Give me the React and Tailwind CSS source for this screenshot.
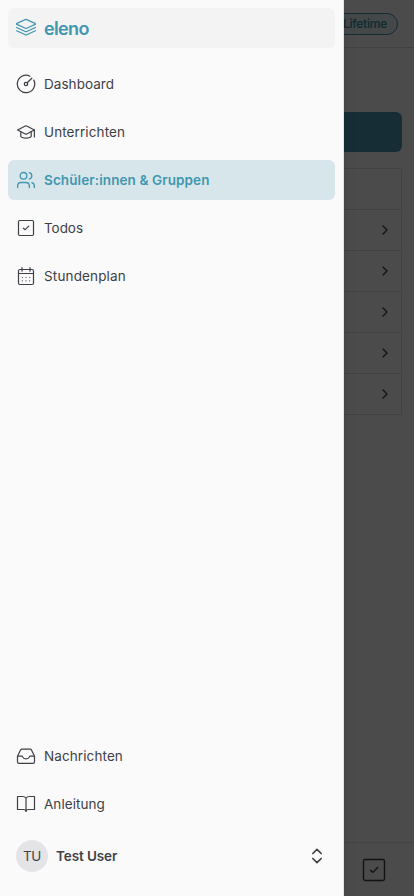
import React from "react";
import { Users, ChevronRight, ChevronsUpDown } from "lucide-react";

function Icon({ children, className = "size-5 shrink-0", width = 1.1 }) {
  return (
    <svg viewBox="0 0 20 20" className={className} fill="none" stroke="currentColor" strokeWidth={width} strokeLinecap="round" strokeLinejoin="round">
      {children}
    </svg>
  );
}

const Logo = () => (
  <Icon width={1.25}>
    <path d="M9.300 1.600.9 5.400Q.1 5.900.9 6.400l8.400 3.800q.7.300 1.400 0l8.400-3.800q.8-.5 0-1L10.700 1.600q-.7-.3-1.400 0Z" />
    <path d="M.6 9.500l8.700 4q.7.300 1.400 0l8.700-4" />
    <path d="M.6 12.800l8.700 4q.7.300 1.400 0l8.700-4" />
  </Icon>
);

const Gauge = () => (
  <Icon width={1.25}>
    <path d="M13.900 2.200a8.700 8.700 0 1 0 3.900 3.900" />
    <circle cx="10" cy="10" r="1.700" />
    <path d="M11.200 8.800 15.800 4.200" />
  </Icon>
);

const Cap = () => (
  <Icon width={1.2}>
    <path d="M1.600 8 9.300 4q.7-.3 1.400 0L18.400 8 10.700 12q-.7.300-1.400 0Z" />
    <path d="M4.800 9.800v4.400c0 .8 2.300 2 5.200 2s5.200-1.200 5.200-2V9.800M18.400 8v7" />
  </Icon>
);

const Check = ({ className, width = 1.2 }) => (
  <Icon className={className} width={width}>
    <rect x="2.500" y="2.500" width="15" height="15" rx="1.200" />
    <path d="m7.400 10.200 1.800 1.500 3.500-3.500" />
  </Icon>
);

const Calendar = () => (
  <Icon width={1.2}>
    <rect x="2.500" y="3.500" width="15" height="15" rx="1.500" />
    <path d="M2.500 7.500h15M6 1.500v3.700M14 1.500v3.700" />
    <path d="M6.300 11.500h.01M10 11.500h.01M13.700 11.500h.01M6.300 14.800h.01M10 14.800h.01M13.700 14.800h.01" />
  </Icon>
);

const Tray = () => (
  <Icon width={1.2}>
    <path d="m1.500 10.200 3-6.100q.5-1 1.500-1h8q1 0 1.500 1l3 6.100v5.600q0 1.500-1.500 1.500H3q-1.500 0-1.500-1.500Z" />
    <path d="M1.500 10.200h4.200q.7 0 .9.700.7 2 3.400 2t3.400-2q.2-.7.9-.7h4.200" />
  </Icon>
);

const Book = () => (
  <Icon width={1.2}>
    <path d="M10 4.100Q8.700 2.500 6.500 2.500h-5v13h5.800q2.200 0 2.700 1.900.5-1.900 2.700-1.900h5.800v-13h-5Q11.300 2.500 10 4.100ZM10 4.100v13.300" />
  </Icon>
);

function NavItem({ icon, label, tracking, active }) {
  return (
    <a className={`flex h-10 items-center gap-2 rounded-md px-2 text-[13.5px] ${active ? "bg-[#d7e6ea] font-semibold text-[#4196b0]" : "text-[#3f3f46]"}`}>
      {icon}
      <span className={`whitespace-nowrap pt-px ${tracking}`}>{label}</span>
    </a>
  );
}

function Page() {
  return (
    <div className="flex h-full flex-col bg-[#fafafa]">
      <header className="flex h-12 items-center justify-end border-b border-[#dcdcdc] pr-4">
        <span className="flex h-[22px] items-center rounded-full border border-[#4196b0] bg-[#e7f0f3] px-2.5 pt-px text-xs font-semibold tracking-[-0.35px] text-[#4196b0]">Lifetime</span>
      </header>
      <main className="grow px-3 pt-16">
        <div className="h-10 rounded-md bg-[#4e98b2]" />
        <div className="mt-4 border border-[#dedee2]">
          <div className="h-10" />
          {[0, 1, 2, 3, 4].map((row) => (
            <div key={row} className="flex h-[41px] items-center justify-end border-t border-[#dedee2] pr-2">
              <ChevronRight className="size-4 text-[#3f3f46]" />
            </div>
          ))}
        </div>
      </main>
      <footer className="flex h-[54px] items-center justify-end border-t border-[#e4e4e7] pr-[26px]">
        <Check className="size-7 text-[#3f3f46]" width={1} />
      </footer>
    </div>
  );
}

export default function App() {
  return (
    <div className="relative h-[896px] w-[414px] overflow-hidden font-[Inter,sans-serif]">
      <Page />
      <div className="absolute inset-0 bg-black/70" />
      <aside className="absolute inset-y-0 left-0 flex w-[344px] flex-col border-r border-[#e4e4e7] bg-[#fafafa] px-2 shadow-lg">
        <div className="mt-2 flex h-10 items-center gap-2 rounded-md bg-[#f3f3f3] px-2 text-[#4196b0]">
          <Logo />
          <span className="pt-px text-lg leading-5 font-semibold tracking-[-0.65px]">eleno</span>
        </div>
        <nav className="mt-4 flex flex-col gap-2">
          <NavItem icon={<Gauge />} label="Dashboard" tracking="tracking-[0.05px]" />
          <NavItem icon={<Cap />} label="Unterrichten" tracking="tracking-[0.1px]" />
          <NavItem icon={<Users className="size-5 shrink-0" strokeWidth={1.6} />} label="Schüler:innen & Gruppen" tracking="tracking-[0.1px]" active />
          <NavItem icon={<Check className="size-5 shrink-0" />} label="Todos" tracking="tracking-[-0.05px]" />
          <NavItem icon={<Calendar />} label="Stundenplan" tracking="tracking-[0.15px]" />
        </nav>
        <nav className="mt-auto flex flex-col gap-2">
          <NavItem icon={<Tray />} label="Nachrichten" tracking="tracking-[0.1px]" />
          <NavItem icon={<Book />} label="Anleitung" tracking="tracking-[0.05px]" />
        </nav>
        <div className="mt-2 mb-4 flex h-12 items-center gap-2 px-2 text-[13.5px] text-[#3f3f46]">
          <span className="flex size-8 items-center justify-center rounded-full bg-[#e4e4e7] pt-px tracking-[-0.3px]">TU</span>
          <span className="grow font-semibold tracking-[-0.1px]">Test User</span>
          <ChevronsUpDown className="size-5" strokeWidth={2} />
        </div>
      </aside>
    </div>
  );
}
